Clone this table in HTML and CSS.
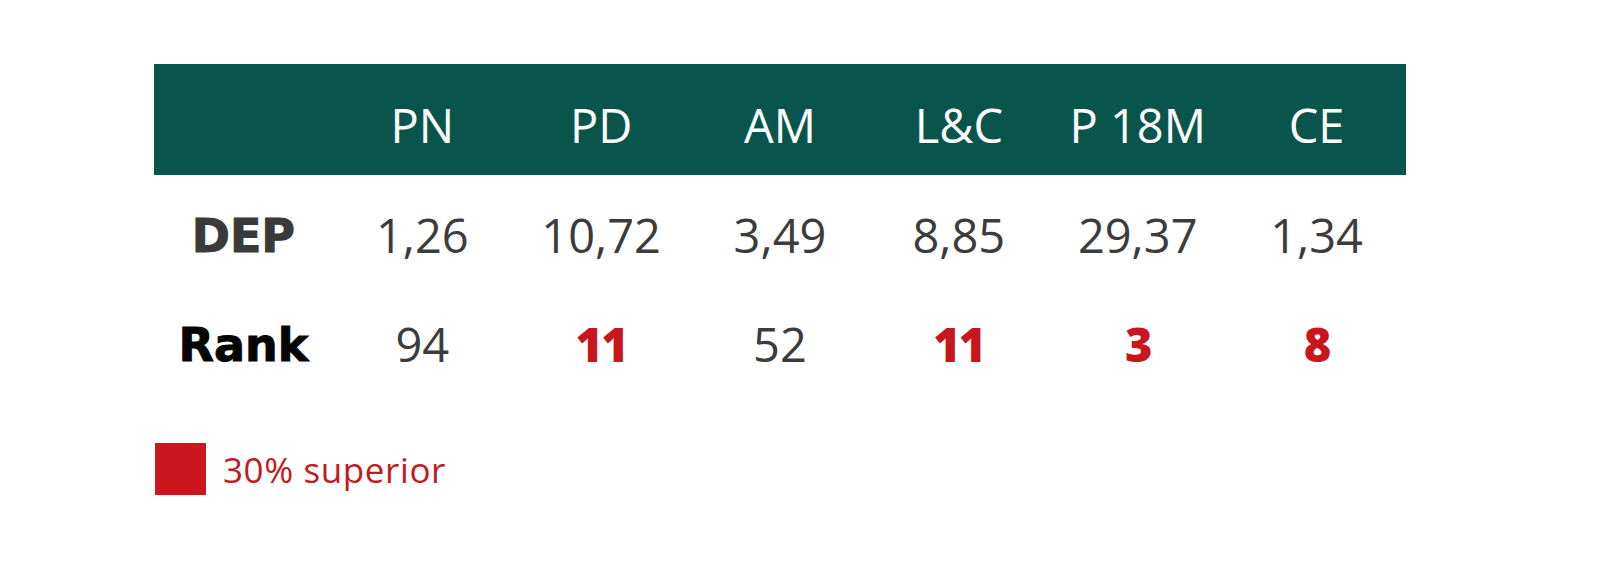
FILE: index.html
```html
<!DOCTYPE html>
<html lang="es">
<head>
<meta charset="utf-8">
<title>DEP Rank</title>
<link rel="stylesheet" href="styles.css">
</head>
<body>
<main class="page">
  <div class="table">
    <div class="row head">
      <div class="cell"></div>
      <div class="cell">PN</div>
      <div class="cell">PD</div>
      <div class="cell">AM</div>
      <div class="cell">L&amp;C</div>
      <div class="cell">P 18M</div>
      <div class="cell">CE</div>
    </div>
    <div class="row body">
      <div class="cell label dep">DEP</div>
      <div class="cell">1,26</div>
      <div class="cell">10,72</div>
      <div class="cell">3,49</div>
      <div class="cell">8,85</div>
      <div class="cell">29,37</div>
      <div class="cell">1,34</div>
    </div>
    <div class="row body">
      <div class="cell label rank">Rank</div>
      <div class="cell">94</div>
      <div class="cell hi">11</div>
      <div class="cell">52</div>
      <div class="cell hi">11</div>
      <div class="cell hi">3</div>
      <div class="cell hi">8</div>
    </div>
  </div>
  <div class="legend">
    <span class="swatch"></span>
    <span class="legend-text">30% superior</span>
  </div>
</main>
</body>
</html>
```

FILE: styles.css
```css
html, body {
  margin: 0;
  padding: 0;
  background: #ffffff;
}

body {
  font-family: "Open Sans", "Liberation Sans", sans-serif;
  color: #3c3c3c;
}

.page {
  padding: 64px 0 0 154px;
}

.table {
  width: 1252px;
}

.row {
  display: grid;
  grid-template-columns: repeat(7, 1fr);
}

.cell {
  text-align: center;
  font-size: 47px;
  line-height: 47px;
  white-space: nowrap;
}

.head {
  background: #0a554b;
  color: #ffffff;
  height: 111px;
  box-sizing: border-box;
  padding-top: 38px;
}

.body {
  height: 109px;
  box-sizing: border-box;
  padding-top: 37px;
}

.label {
  font-family: "DejaVu Sans", "Open Sans", sans-serif;
  font-weight: 700;
  font-size: 46px;
  line-height: 47px;
  padding-top: 1px;
  -webkit-text-stroke: 1px currentColor;
}

.dep {
  color: #3a3a3a;
}

.rank {
  color: #050505;
}

.hi {
  color: #c8161e;
  font-weight: 800;
  letter-spacing: -2px;
}

.legend {
  display: flex;
  align-items: center;
  gap: 17px;
  margin-top: 50px;
}

.swatch {
  width: 51px;
  height: 52px;
  background: #cc161d;
  margin-left: 1px;
}

.legend-text {
  color: #c11a20;
  font-size: 35px;
  line-height: 40px;
  letter-spacing: 0.6px;
  padding-top: 2px;
}
```
